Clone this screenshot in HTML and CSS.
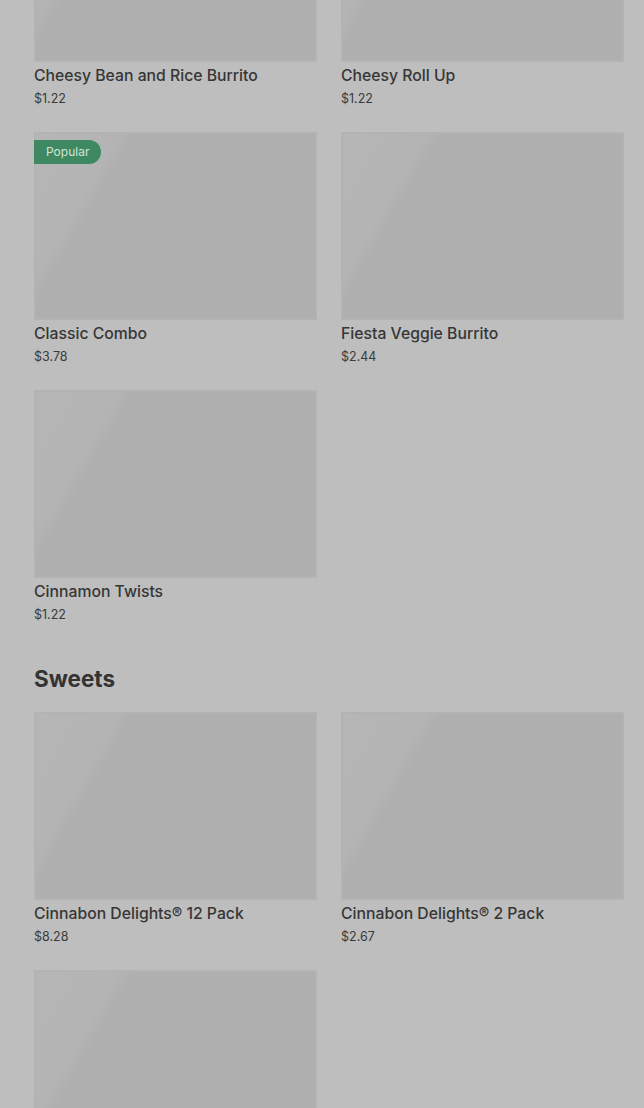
FILE: index.html
```html
<!DOCTYPE html>
<html lang="en">
<head>
    <meta charset="UTF-8">
    <meta name="viewport" content="width=device-width, initial-scale=1.0">
    <title>Menu</title>
    <link rel="stylesheet" href="styles.css">
</head>
<body>
    <div class="menu">
        <!-- Previous category (scrolled) -->
        <section class="category category-scrolled">
            <div class="item-grid">
                <div class="item">
                    <div class="item-image"></div>
                    <p class="item-name">Cheesy Bean and Rice Burrito</p>
                    <p class="item-price">$1.22</p>
                </div>
                <div class="item">
                    <div class="item-image"></div>
                    <p class="item-name">Cheesy Roll Up</p>
                    <p class="item-price">$1.22</p>
                </div>
                <div class="item">
                    <div class="item-image">
                        <span class="badge">Popular</span>
                    </div>
                    <p class="item-name">Classic Combo</p>
                    <p class="item-price">$3.78</p>
                </div>
                <div class="item">
                    <div class="item-image"></div>
                    <p class="item-name">Fiesta Veggie Burrito</p>
                    <p class="item-price">$2.44</p>
                </div>
                <div class="item">
                    <div class="item-image"></div>
                    <p class="item-name">Cinnamon Twists</p>
                    <p class="item-price">$1.22</p>
                </div>
            </div>
        </section>

        <!-- Sweets -->
        <section class="category">
            <h2 class="category-title">Sweets</h2>
            <div class="item-grid">
                <div class="item">
                    <div class="item-image"></div>
                    <p class="item-name">Cinnabon Delights® 12 Pack</p>
                    <p class="item-price">$8.28</p>
                </div>
                <div class="item">
                    <div class="item-image"></div>
                    <p class="item-name">Cinnabon Delights® 2 Pack</p>
                    <p class="item-price">$2.67</p>
                </div>
                <div class="item">
                    <div class="item-image"></div>
                </div>
            </div>
        </section>
    </div>
</body>
</html>
```

FILE: styles.css
```css
/* General Styles */
body {
    font-family: Inter, Roboto, "Liberation Sans", sans-serif;
    background-color: #bebebe;
    color: #363636;
    margin: 0;
    padding: 0;
    overflow: hidden;
}

.menu {
    padding: 0 20px 0 34px;
}

.category-scrolled {
    margin-top: -126px;
}

.category {
    margin-bottom: 40px;
}

.category-title {
    font-size: 22.5px;
    font-weight: 700;
    line-height: 28px;
    margin: 0 0 19px;
    color: #333;
}

.item-grid {
    display: grid;
    grid-template-columns: 1fr 1fr;
    column-gap: 24px;
    row-gap: 23px;
}

.item p {
    margin: 0;
}

.item-image {
    position: relative;
    height: 188px;
    background: linear-gradient(120deg, #b6b6b6 0%, #b4b4b4 22%, #afafaf 26%, #afafaf 100%);
    box-shadow: inset 0 0 0 2px #b3b3b3;
    margin-bottom: 3px;
}

.badge {
    position: absolute;
    top: 8px;
    left: 0;
    height: 24px;
    line-height: 24px;
    padding: 0 12px;
    background: #3f8962;
    color: #cfe3d6;
    font-size: 12px;
    border-radius: 0 12px 12px 0;
}

.item-name {
    font-size: 15.75px;
    font-weight: 500;
    line-height: 22px;
}

.item-price {
    font-size: 12.5px;
    line-height: 20px;
    margin-top: 2px !important;
    color: #3a3a3a;
}
```
